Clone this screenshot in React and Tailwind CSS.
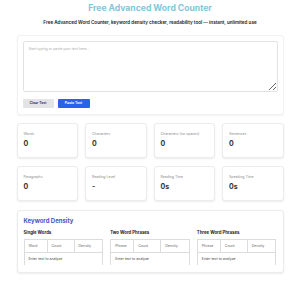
import React from 'react';

const stats = [
  { label: 'Words', value: '0' },
  { label: 'Characters', value: '0' },
  { label: 'Characters (no spaces)', value: '0' },
  { label: 'Sentences', value: '0' },
  { label: 'Paragraphs', value: '0' },
  { label: 'Reading Level', value: '-' },
  { label: 'Reading Time', value: '0s' },
  { label: 'Speaking Time', value: '0s' },
];

const tables = [
  { title: 'Single Words', first: 'Word' },
  { title: 'Two Word Phrases', first: 'Phrase' },
  { title: 'Three Word Phrases', first: 'Phrase' },
];

function StatCard({ label, value }) {
  return (
    <div className="h-[35px] rounded-[3px] border border-[#ececec] bg-white px-[6px] pt-[8px] shadow-[0_1px_2px_rgba(0,0,0,0.08)]">
      <div className="text-[3.5px] leading-[4px] text-[#8a8a8a]">{label}</div>
      <div className="mt-[4px] text-[7px] font-bold leading-[8px] text-[#333]">{value}</div>
    </div>
  );
}

function DensityTable({ title, first }) {
  return (
    <div>
      <div className="text-[4.3px] font-bold leading-[6px] text-[#222]">{title}</div>
      <div className="mt-[3px] border-x border-t border-[#dcdcdc] text-[3.5px] text-[#666]">
        <div className="grid h-[13px] grid-cols-[23px_27px_1fr] items-center border-b border-[#dcdcdc]">
          <div className="h-full border-r border-[#dcdcdc] pl-[4px] leading-[13px]">{first}</div>
          <div className="h-full border-r border-[#dcdcdc] pl-[4px] leading-[13px]">Count</div>
          <div className="pl-[4px]">Density</div>
        </div>
        <div className="h-[12px] pl-[4px] leading-[12px] text-[#444]">Enter text to analyze</div>
      </div>
    </div>
  );
}

export default function App() {
  return (
    <div className="min-h-[282px] bg-white font-['Inter',sans-serif]">
      <div className="mx-auto w-[267px] pt-[2px]">
        <h1 className="text-center text-[8.6px] font-bold leading-[12px] text-[#80c6da]">Free Advanced Word Counter</h1>
        <p className="mt-[6px] text-center text-[4.6px] font-semibold leading-[6px] text-[#222]">
          Free Advanced Word Counter, keyword density checker, readability tool — instant, unlimited use
        </p>

        <div className="mt-[9px] rounded-[3px] border border-[#f2f2f2] bg-white px-[5px] pb-[6px] pt-[5px] shadow-[0_1px_2px_rgba(0,0,0,0.05)]">
          <textarea
            placeholder="Start typing or paste your text here..."
            className="block h-[51px] w-full rounded-[2px] border border-[#e2e2e2] px-[5px] py-[5px] text-[3.5px] leading-[5px] text-[#333] placeholder:text-[#aaa] focus:outline-none"
          />
          <div className="mt-[7px] flex gap-[4px]">
            <button className="h-[9px] w-[31px] rounded-[1px] bg-[#e4e4e7] text-[3.5px] font-semibold text-[#333]">Clear Text</button>
            <button className="h-[9px] w-[32px] rounded-[1px] bg-[#2563eb] text-[3.5px] font-semibold text-white">Paste Text</button>
          </div>
        </div>

        <div className="mt-[8px] grid grid-cols-4 gap-x-[7px] gap-y-[8px]">
          {stats.map((s) => (
            <StatCard key={s.label} label={s.label} value={s.value} />
          ))}
        </div>

        <div className="mt-[9px] h-[63px] rounded-[3px] border border-[#ececec] bg-white px-[6px] pt-[6px] shadow-[0_1px_2px_rgba(0,0,0,0.08)]">
          <h2 className="text-[6px] font-bold leading-[8px] text-[#4556c0]">Keyword Density</h2>
          <div className="mt-[5px] grid grid-cols-3 gap-x-[7px]">
            {tables.map((t) => (
              <DensityTable key={t.title} title={t.title} first={t.first} />
            ))}
          </div>
        </div>
      </div>
    </div>
  );
}
